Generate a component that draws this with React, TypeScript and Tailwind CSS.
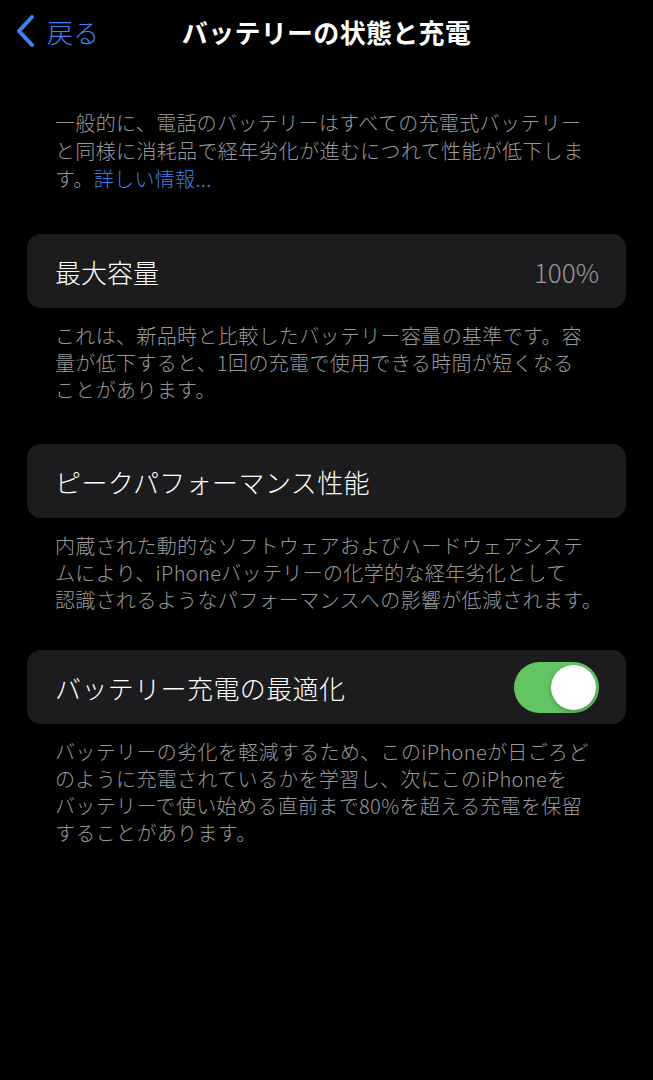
const font = "font-['Noto_Sans_CJK_JP','Noto_Sans',sans-serif]";

function Note({ children }: { children: React.ReactNode }) {
  return (
    <p className="whitespace-nowrap pl-[55px] pt-[14px] text-[20px] font-light leading-[27px] tracking-[0.35px] text-[#98989e]">
      {children}
    </p>
  );
}

function Card({ children }: { children: React.ReactNode }) {
  return (
    <div className="mx-[27px] flex h-[74px] items-center justify-between rounded-[14px] bg-[#1c1c1e] pl-[28px] pr-[27px]">
      {children}
    </div>
  );
}

export default function App() {
  return (
    <div className={`${font} min-h-[1080px] w-[653px] bg-black text-white`}>
      <header className="relative flex h-[62px] items-center">
        <div className="flex items-center pl-[14px] text-[#3f84f2]">
          <svg width="24" height="34" viewBox="0 0 24 34" fill="none">
            <path d="M18 3 L5 17 L18 31" stroke="currentColor" strokeWidth="4" strokeLinecap="round" strokeLinejoin="round" />
          </svg>
          <span className="ml-[9px] text-[26px] font-light">戻る</span>
        </div>
        <h1 className="absolute left-0 right-0 text-center text-[26px] font-semibold tracking-[0.3px]">
          バッテリーの状態と充電
        </h1>
      </header>

      <p className="mt-[47px] whitespace-nowrap pl-[55px] text-[20px] font-light leading-[28px] tracking-[0.35px] text-[#98989e]">
        一般的に、電話のバッテリーはすべての充電式バッテリー
        <br />
        と同様に消耗品で経年劣化が進むにつれて性能が低下しま
        <br />
        す。<span className="text-[#3f7ee8]">詳しい情報...</span>
      </p>

      <div className="mt-[41px]">
        <Card>
          <span className="text-[26px] font-light">最大容量</span>
          <span className="text-[26px] font-light text-[#98989e]">100%</span>
        </Card>
        <Note>
          これは、新品時と比較したバッテリー容量の基準です。容
          <br />
          量が低下すると、1回の充電で使用できる時間が短くなる
          <br />
          ことがあります。
        </Note>
      </div>

      <div className="mt-[41px]">
        <Card>
          <span className="text-[26px] font-light tracking-[0.4px]">ピークパフォーマンス性能</span>
        </Card>
        <Note>
          内蔵された動的なソフトウェアおよびハードウェアシステ
          <br />
          ムにより、iPhoneバッテリーの化学的な経年劣化として
          <br />
          認識されるようなパフォーマンスへの影響が低減されます。
        </Note>
      </div>

      <div className="mt-[37px]">
        <Card>
          <span className="text-[26px] font-light tracking-[0.4px]">バッテリー充電の最適化</span>
          <div className="flex h-[51px] w-[85px] items-center justify-end rounded-full bg-[#62c462] pr-[3px]">
            <div className="h-[45px] w-[45px] rounded-full bg-white shadow-[0_2px_4px_rgba(0,0,0,0.25)]" />
          </div>
        </Card>
        <Note>
          バッテリーの劣化を軽減するため、このiPhoneが日ごろど
          <br />
          のように充電されているかを学習し、次にこのiPhoneを
          <br />
          バッテリーで使い始める直前まで80%を超える充電を保留
          <br />
          することがあります。
        </Note>
      </div>
    </div>
  );
}
